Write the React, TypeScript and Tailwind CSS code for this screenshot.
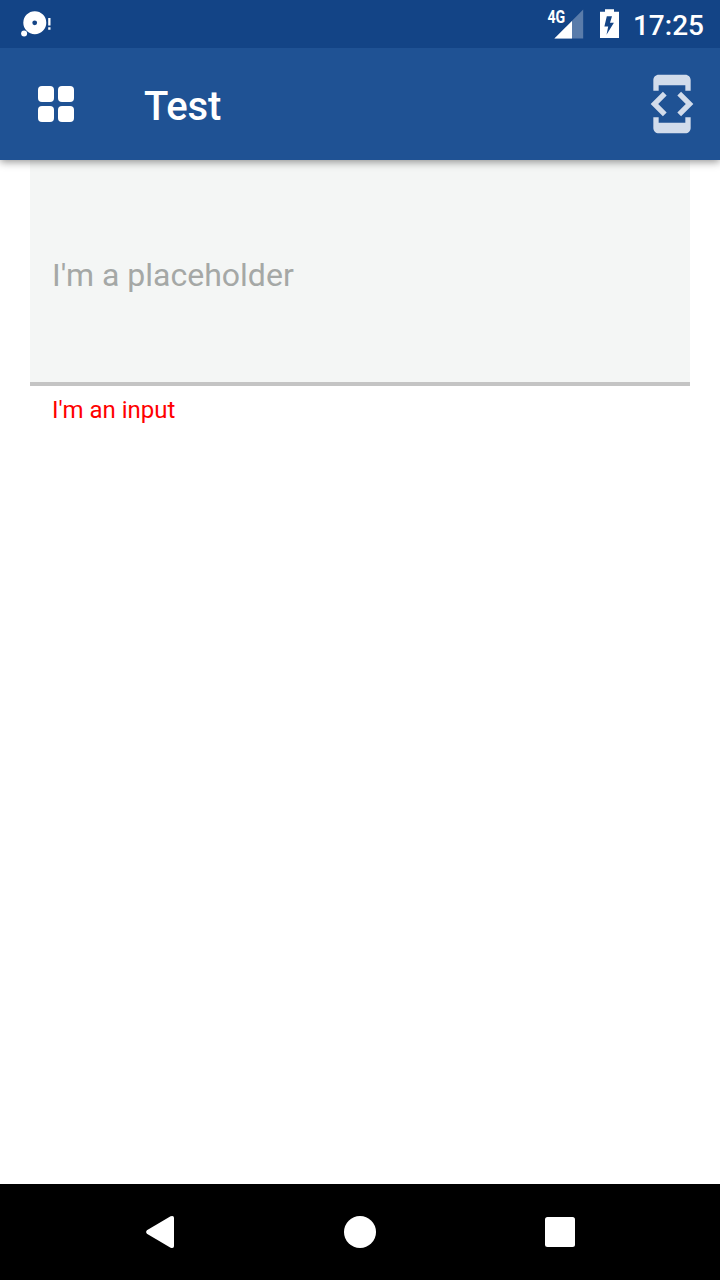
function DiscIcon() {
  return (
    <svg className="h-12 w-16 shrink-0" viewBox="0 0 64 48" fill="white">
      <path fillRule="evenodd" d="M34.8 11.2a11.5 11.5 0 1 0 0 23a11.5 11.5 0 1 0 0-23zM34.7 20.4a2.4 2.4 0 1 1 0 4.8a2.4 2.4 0 1 1 0-4.8z" />
      <circle cx="24.1" cy="33.5" r="3" />
      <path d="M48.2 18h2.3v7.5h-2.3zM48.2 27.3h2.3v2.4h-2.3z" />
    </svg>
  );
}

function SignalIcon() {
  return (
    <svg className="h-12 w-10 shrink-0" viewBox="0 0 40 48">
      <path d="M38.2 9.6V38.6H9.4z" fill="white" fillOpacity="0.3" />
      <path d="M27 20.9V38.6H9.4z" fill="white" />
      <text x="2.4" y="22.9" fill="white" fontFamily="Roboto, sans-serif" fontWeight="700" fontSize="17.5" textLength="17.8" lengthAdjust="spacingAndGlyphs">4G</text>
    </svg>
  );
}

function BatteryIcon() {
  return (
    <svg className="h-12 w-6 shrink-0" viewBox="0 0 24 48" fill="white">
      <path fillRule="evenodd" d="M7 9.2h9v2.6h5v26.2H2V11.8h5zM8.8 16.3L6.4 26.5h3.8L8.5 34.8L15.9 22.8h-3.9L14 16.3z" />
    </svg>
  );
}

function StatusBar() {
  return (
    <div className="relative z-20 flex h-12 items-center bg-[#134486] text-white">
      <DiscIcon />
      <div className="ml-auto flex items-center pr-4">
        <SignalIcon />
        <div className="ml-[13px] flex"><BatteryIcon /></div>
        <span className="ml-[11px] pt-1 text-[28px] leading-8 font-medium">17:25</span>
      </div>
    </div>
  );
}

function AppBar() {
  return (
    <header className="relative z-10 flex h-28 items-center bg-[#1f5294] pr-4 pl-[38px] text-white shadow-[0_2px_8px_rgba(0,0,0,0.42)]">
      <div className="grid grid-cols-2 gap-1">
        <span className="size-4 rounded-[4px] bg-white" />
        <span className="size-4 rounded-[4px] bg-white" />
        <span className="size-4 rounded-[4px] bg-white" />
        <span className="size-4 rounded-[4px] bg-white" />
      </div>
      <h1 className="ml-[70px] pt-1.5 text-[40px] leading-12 font-medium tracking-[-0.2px]">Test</h1>
      <svg className="ml-auto size-16" viewBox="0 0 24 24" fill="#d2dceb">
        <path d="M7 5h10v2h2V3c0-1.1-.9-1.99-2-1.99L7 1c-1.1 0-2 .9-2 2v4h2V5zm8.41 11.59L20 12l-4.59-4.59L14 8.83 17.17 12 14 15.17l1.41 1.42zM10 15.17L6.83 12 10 8.83 8.59 7.41 4 12l4.59 4.59L10 15.17zM17 19H7v-2H5v4c0 1.1.9 2 2 2h10c1.1 0 2-.9 2-2v-4h-2v2z" />
      </svg>
    </header>
  );
}

function NavigationBar() {
  return (
    <nav className="flex h-24 items-center justify-center gap-[136px] bg-black">
      <svg className="size-16" viewBox="0 0 64 64" fill="white">
        <path d="M18.9 30.2L42.6 16.3Q46 15 46 18V46Q46 49 42.6 47.7L18.9 33.8Q17.1 32 18.9 30.2z" />
      </svg>
      <svg className="size-16" viewBox="0 0 64 64" fill="white">
        <circle cx="32" cy="32" r="16" />
      </svg>
      <svg className="size-16" viewBox="0 0 64 64" fill="white">
        <rect x="17" y="17" width="30" height="30" rx="2.5" />
      </svg>
    </nav>
  );
}

export default function App() {
  return (
    <div className="flex h-[1280px] w-[720px] flex-col overflow-hidden bg-white font-[Roboto,sans-serif]">
      <StatusBar />
      <AppBar />
      <main className="flex-1 px-[30px]">
        <div className="flex h-[226px] items-center border-b-4 border-[#c4c4c4] bg-[#f4f6f5] px-[22px] pt-2">
          <span className="text-[32px] leading-10 text-[#a5a8a6]">I'm a placeholder</span>
        </div>
        <p className="px-[22px] pt-2 text-2xl text-[#ff0000]">I'm an input</p>
      </main>
      <NavigationBar />
    </div>
  );
}
